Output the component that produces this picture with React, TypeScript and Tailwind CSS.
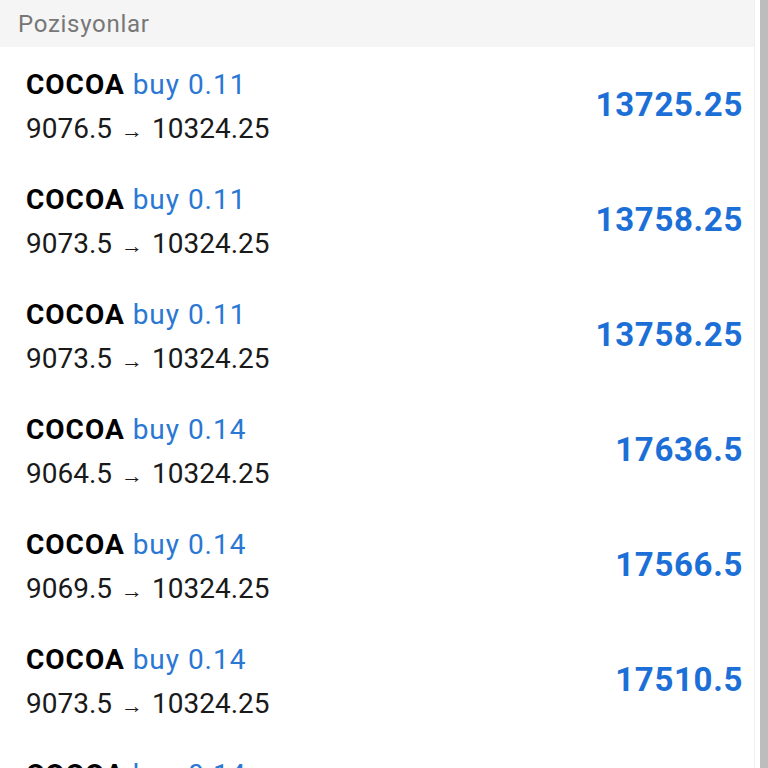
const positions = [
  { lot: '0.11', open: '9076.5', close: '10324.25', value: '13725.25' },
  { lot: '0.11', open: '9073.5', close: '10324.25', value: '13758.25' },
  { lot: '0.11', open: '9073.5', close: '10324.25', value: '13758.25' },
  { lot: '0.14', open: '9064.5', close: '10324.25', value: '17636.5' },
  { lot: '0.14', open: '9069.5', close: '10324.25', value: '17566.5' },
  { lot: '0.14', open: '9073.5', close: '10324.25', value: '17510.5' },
  { lot: '0.14', open: '9073.5', close: '10324.25', value: '17510.5' },
];

export default function App() {
  return (
    <div
      className="flex h-screen w-full overflow-hidden bg-white"
      style={{ fontFamily: 'Roboto, "Noto Sans", sans-serif' }}
    >
      <div className="flex w-[755px] flex-col border-r border-[#f0f0f0]">
        <div className="flex h-[47px] shrink-0 items-center bg-[#f5f5f5] pl-[18px] text-[24px] tracking-[0.03em] text-[#777777]">
          Pozisyonlar
        </div>
        {positions.map((p, i) => (
          <div key={i} className="flex h-[115px] shrink-0 items-center justify-between pl-[26px] pr-[11px]">
            <div className="flex flex-col pt-[6px] text-[28px] leading-[44px]">
              <div className="tracking-[0.035em]">
                <span className="font-bold text-black">COCOA</span>{' '}
                <span className="text-[#2a78d4]">buy {p.lot}</span>
              </div>
              <div className="text-[#1a1a1a]">
                {p.open} <span className="mx-[2px] text-[22px]">→</span> {p.close}
              </div>
            </div>
            <div className="text-[33px] font-bold tracking-[0.02em] text-[#1c6fd6]">{p.value}</div>
          </div>
        ))}
      </div>
      <div className="flex-1" />
      <div className="w-[8px] bg-[#bdbdbd]" />
    </div>
  );
}
